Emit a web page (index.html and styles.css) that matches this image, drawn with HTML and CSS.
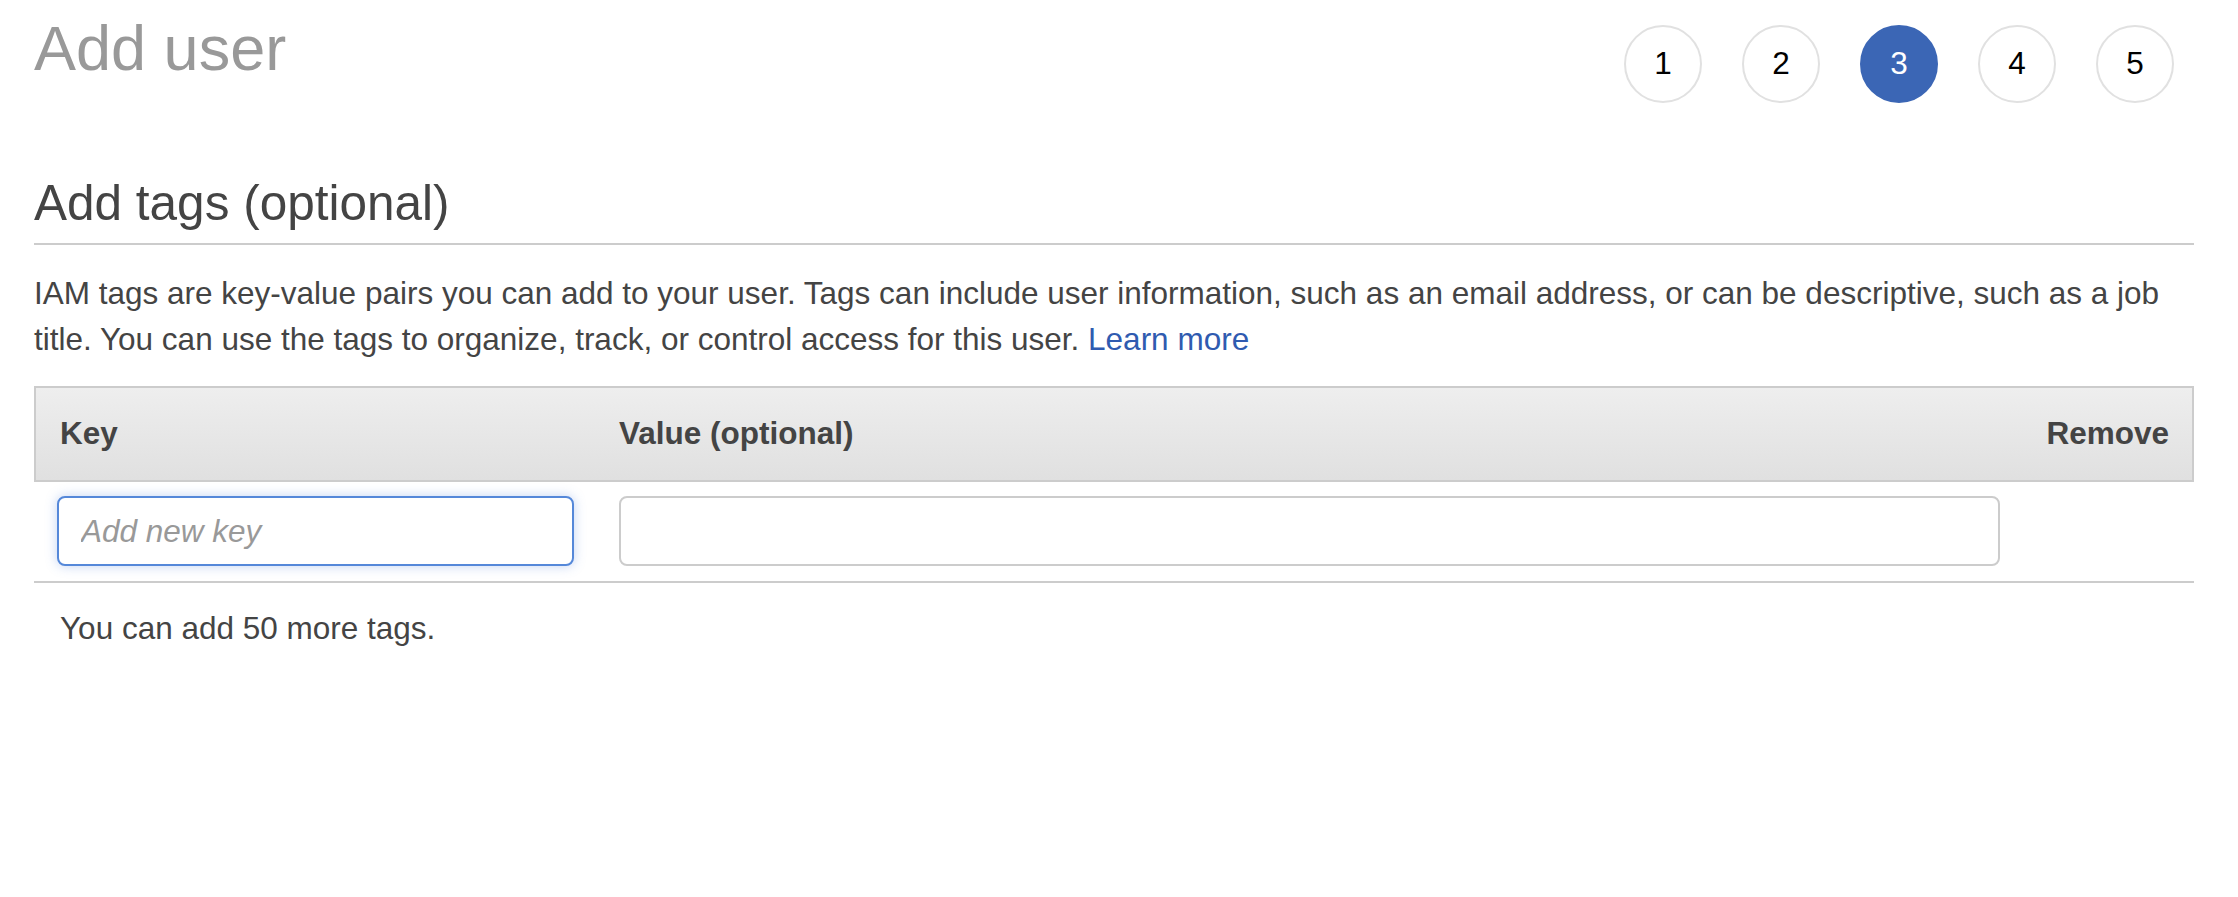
FILE: index.html
```html
<!DOCTYPE html>
<html lang="en">
<head>
<meta charset="utf-8">
<title>Add user</title>
<link rel="stylesheet" href="styles.css">
</head>
<body>
<div class="page">
  <header class="top">
    <h1 class="title">Add user</h1>
    <ol class="steps">
      <li class="step">1</li>
      <li class="step">2</li>
      <li class="step step-active">3</li>
      <li class="step">4</li>
      <li class="step">5</li>
    </ol>
  </header>

  <h2 class="section-title">Add tags (optional)</h2>
  <p class="intro">IAM tags are key-value pairs you can add to your user. Tags can include user information, such as an email address, or can be descriptive, such as a job title. You can use the tags to organize, track, or control access for this user. <a class="link" href="#">Learn more</a></p>

  <div class="tags-table">
    <div class="tags-row tags-head">
      <div class="col-key">Key</div>
      <div class="col-value">Value (optional)</div>
      <div class="col-remove">Remove</div>
    </div>
    <div class="tags-row tags-body">
      <div class="col-key"><input class="field field-focus" type="text" placeholder="Add new key"></div>
      <div class="col-value"><input class="field field-wide" type="text"></div>
      <div class="col-remove"></div>
    </div>
  </div>

  <p class="remaining">You can add 50 more tags.</p>
</div>
</body>
</html>
```

FILE: styles.css
```css
* { box-sizing: border-box; }

html, body {
  margin: 0;
  padding: 0;
  background: #fff;
}

body {
  font-family: "Liberation Sans", Arial, Helvetica, sans-serif;
  font-size: 31.5px;
  line-height: 45px;
  color: #444;
}

.page {
  padding: 10px 44px 0 34px;
}

.top {
  display: flex;
  justify-content: space-between;
  align-items: flex-start;
}

.title {
  margin: 0;
  font-size: 63px;
  line-height: 76px;
  font-weight: normal;
  color: #999;
}

.steps {
  list-style: none;
  display: flex;
  gap: 40px;
  margin: 15px 20px 0 0;
  padding: 0;
}

.step {
  width: 78px;
  height: 78px;
  border: 2px solid #e1e1e1;
  border-radius: 50%;
  display: flex;
  align-items: center;
  justify-content: center;
  color: #000;
  font-size: 31.5px;
  line-height: 1;
}

.step-active {
  background: #3b66b5;
  border-color: #3b66b5;
  color: #fff;
}

.section-title {
  margin: 71px 0 0;
  padding-bottom: 12px;
  font-size: 49.5px;
  line-height: 57px;
  font-weight: normal;
  color: #444;
  border-bottom: 2px solid #ccc;
}

.intro {
  margin: 25px 0 0;
  line-height: 46px;
}

.link {
  color: #2f5bb0;
  text-decoration: none;
}

.tags-table {
  margin-top: 24px;
}

.tags-row {
  display: grid;
  grid-template-columns: 562px 1fr 169px;
  padding: 0 23px 0 21px;
  align-items: center;
}

.tags-head {
  border: 2px solid #ccc;
  background: linear-gradient(#eeeeee, #e0e0e0);
  padding-top: 23px;
  padding-bottom: 24px;
  font-weight: bold;
  color: #444;
}

.tags-head .col-key {
  padding-left: 3px;
}

.col-remove {
  text-align: right;
}

.tags-body {
  padding: 14px 25px 15px 23px;
  border-bottom: 2px solid #ccc;
}

.field {
  display: block;
  height: 70px;
  width: 517px;
  border: 2px solid #ccc;
  border-radius: 8px;
  padding: 0 22px;
  font-family: inherit;
  font-size: 31.5px;
  color: #444;
  background: #fff;
  outline: none;
}

.field::placeholder {
  color: #999;
  font-style: italic;
}

.field-focus {
  border-color: #5588d9;
  box-shadow: 0 0 12px rgba(80, 130, 220, 0.35);
}

.field-wide {
  width: 100%;
}

.remaining {
  margin: 23px 0 0;
  padding-left: 26px;
}
```
